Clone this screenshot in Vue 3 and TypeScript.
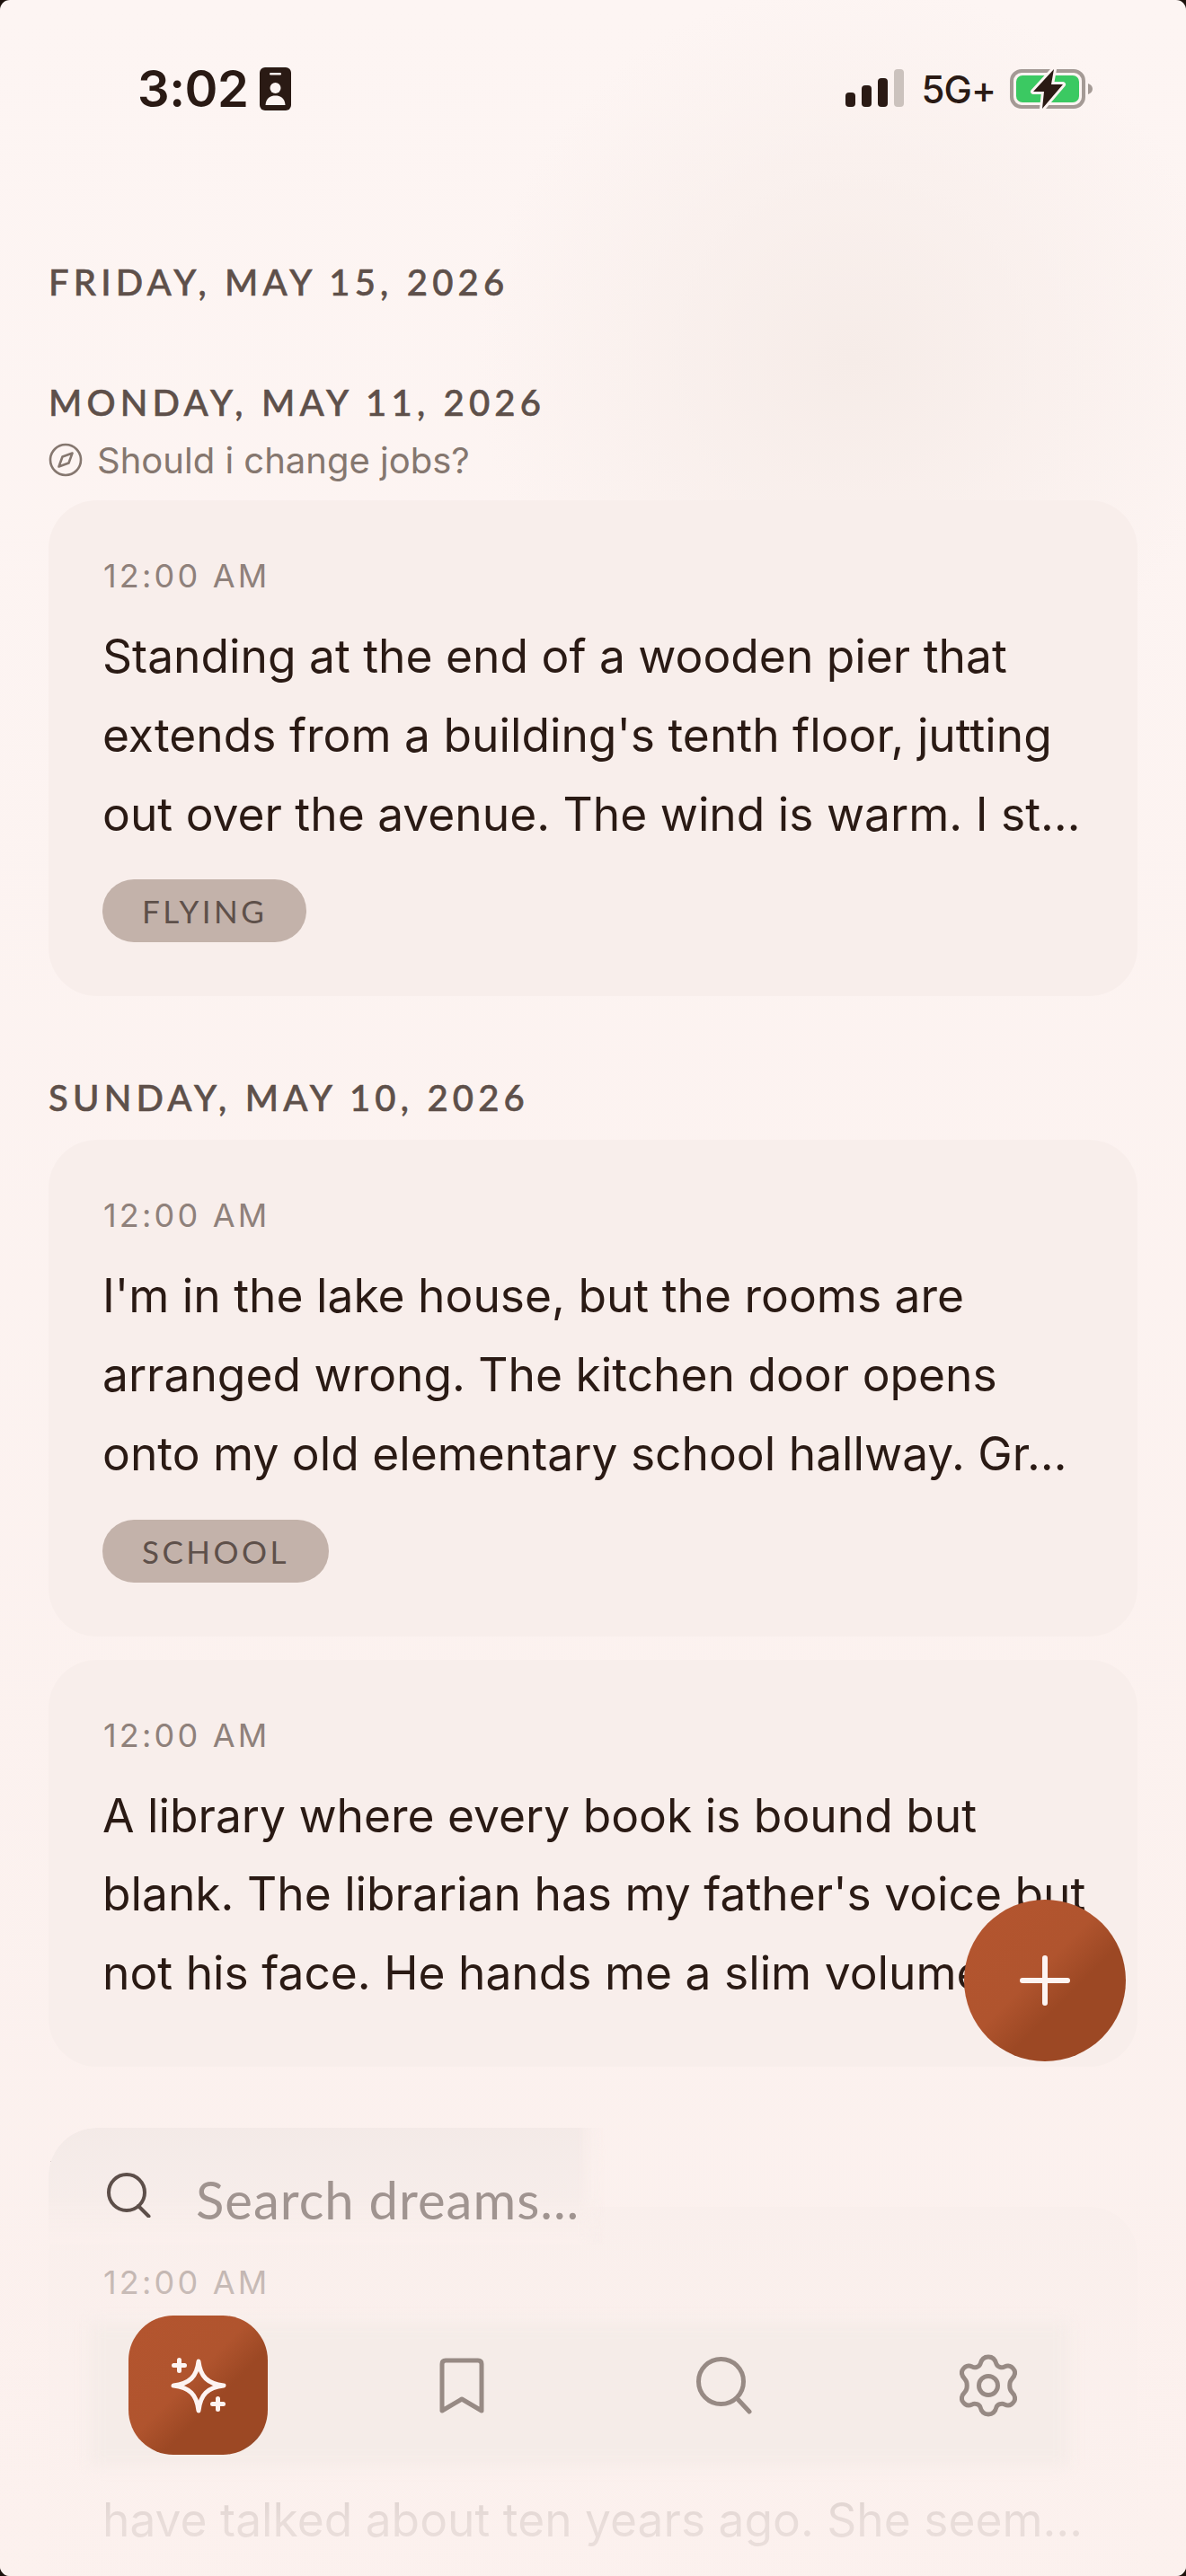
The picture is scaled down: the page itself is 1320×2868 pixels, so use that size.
<script setup lang="ts">
interface Dream {
  text: string[]
  tag?: string
}

interface Section {
  date: string
  question?: string
  dreams: Dream[]
}

const sections: Section[] = [
  { date: 'FRIDAY, MAY 15, 2026', dreams: [] },
  {
    date: 'MONDAY, MAY 11, 2026',
    question: 'Should i change jobs?',
    dreams: [
      {
        text: [
          'Standing at the end of a wooden pier that',
          "extends from a building's tenth floor, jutting",
          'out over the avenue. The wind is warm. I st…'
        ],
        tag: 'FLYING'
      }
    ]
  },
  {
    date: 'SUNDAY, MAY 10, 2026',
    dreams: [
      {
        text: [
          "I'm in the lake house, but the rooms are",
          'arranged wrong. The kitchen door opens',
          'onto my old elementary school hallway. Gr…'
        ],
        tag: 'SCHOOL'
      },
      {
        text: [
          'A library where every book is bound but',
          "blank. The librarian has my father's voice but",
          'not his face. He hands me a slim volume…'
        ]
      }
    ]
  },
  {
    // header of this day sits behind the search bar
    date: '',
    dreams: [
      {
        text: ['\u00a0', '\u00a0', 'have talked about ten years ago. She seem…']
      }
    ]
  }
]
</script>

<template>
  <div class="screen">
    <div class="status-bar">
      <div class="status-left">
        <span class="clock">3:02</span>
        <svg class="badge" viewBox="0 0 35 48" width="35" height="48">
          <rect width="35" height="48" rx="6" fill="#2a1a14" />
          <rect x="11" y="6" width="13" height="2.6" rx="1.3" fill="#fdf4f2" />
          <circle cx="17.5" cy="23" r="6" fill="#fdf4f2" />
          <path d="M6.5 42 C7 34 12 31.5 17.5 31.5 S28 34 28.5 42 Z" fill="#fdf4f2" />
        </svg>
      </div>
      <div class="status-right">
        <svg viewBox="0 0 66 44" width="66" height="44">
          <rect x="1" y="26" width="11" height="16" rx="4" fill="#2a1a14" />
          <rect x="19" y="18" width="11" height="24" rx="4" fill="#2a1a14" />
          <rect x="37" y="10" width="11" height="32" rx="4" fill="#2a1a14" />
          <rect x="55" y="0" width="11" height="42" rx="4" fill="#cbc2bd" />
        </svg>
        <span class="network">5G+</span>
        <svg class="battery" viewBox="0 0 92 50" width="92" height="50">
          <rect x="2" y="5" width="80" height="40" rx="11" fill="none" stroke="#a49a95" stroke-width="4" />
          <rect x="7" y="10" width="70" height="30" rx="7" fill="#3bc962" />
          <path d="M87 19 C90 20 92 22 92 25 S90 30 87 31 Z" fill="#a49a95" />
          <path d="M49 3 L26 28 H38 L36 47 L59 20 H46 Z" fill="#2a1a14" stroke="#fdf4f2" stroke-width="6" stroke-linejoin="round" paint-order="stroke" />
        </svg>
      </div>
    </div>

    <main class="feed">
      <section v-for="section in sections" :key="section.date" class="day">
        <h2 class="date">{{ section.date }}</h2>
        <div v-if="section.question" class="question">
          <svg viewBox="0 0 38 38" width="38" height="38" fill="none" stroke="#85776f" stroke-width="2.6">
            <circle cx="19" cy="19" r="17" />
            <path d="M26.500 11.500 L22.500 22.500 L11.500 26.500 L15.500 15.500 Z" stroke-linejoin="round" />
          </svg>
          <span>{{ section.question }}</span>
        </div>
        <article v-for="dream in section.dreams" :key="dream.text[2]" class="card">
          <div class="time">12:00 AM</div>
          <p class="body">
            <span v-for="line in dream.text" :key="line + dream.text[2]" class="line">{{ line }}</span>
          </p>
          <span v-if="dream.tag" class="tag">{{ dream.tag }}</span>
        </article>
      </section>
    </main>

    <div class="fade"></div>

    <div class="search">
      <svg viewBox="0 0 50 50" width="50" height="50" fill="none" stroke="#5d4f4a" stroke-width="4" stroke-linecap="round">
        <circle cx="23" cy="22" r="20" />
        <path d="M36 37 L47.500 48.500" />
      </svg>
      <span>Search dreams...</span>
    </div>

    <button class="fab" type="button">
      <svg viewBox="0 0 56 56" width="56" height="56" fill="none" stroke="#fdf4f2" stroke-width="6" stroke-linecap="round">
        <path d="M28 3 V53 M3 28 H53" />
      </svg>
    </button>

    <nav class="tabs">
      <button class="tab tab-active" type="button">
        <svg viewBox="0 0 64 64" width="64" height="64" fill="none" stroke="#fdf4f2" stroke-linecap="round" stroke-linejoin="round">
          <path d="M32 5 C34 22 42 30 60 32 C42 34 34 42 32 60 C30 42 22 34 4 32 C22 30 30 22 32 5 Z" stroke-width="5" />
          <path d="M10.500 3.500 V15.500 M4.500 9.500 H16.500 M53.500 46.500 V58.500 M47.500 52.500 H59.500" stroke-width="5" />
        </svg>
      </button>
      <button class="tab" type="button">
        <svg viewBox="0 0 50 62" width="50" height="62" fill="none" stroke="#978a84" stroke-width="5" stroke-linejoin="round">
          <path d="M3 59 V7 Q3 3 7 3 H43 Q47 3 47 7 V59 L25 46 Z" />
        </svg>
      </button>
      <button class="tab" type="button">
        <svg viewBox="0 0 64 64" width="64" height="64" fill="none" stroke="#978a84" stroke-width="5" stroke-linecap="round">
          <circle cx="27.500" cy="27.500" r="25" />
          <path d="M45 46 L59 61" />
        </svg>
      </button>
      <button class="tab" type="button">
        <svg viewBox="0 0 64 70" width="64" height="70" fill="none" stroke="#978a84" stroke-width="5" stroke-linejoin="round">
          <circle cx="32" cy="35" r="10.500" />
          <path d="M32 3 C38 3 40 7 41 11 C42 14 47 16 50 14 C54 12 58 13 61 18 C63 23 60 26 58 28 C55 31 55 39 58 42 C60 44 63 47 61 52 C58 57 54 58 50 56 C47 54 42 56 41 59 C40 63 38 67 32 67 C26 67 24 63 23 59 C22 56 17 54 14 56 C10 58 6 57 3 52 C1 47 4 44 6 42 C9 39 9 31 6 28 C4 26 1 23 3 18 C6 13 10 12 14 14 C17 16 22 14 23 11 C24 7 26 3 32 3 Z" />
        </svg>
      </button>
    </nav>
  </div>
</template>

<style>
html,
body {
  margin: 0;
  background: #1c110c;
}
</style>

<style scoped>
.screen {
  position: relative;
  width: 1320px;
  height: 2868px;
  overflow: hidden;
  border-radius: 11px;
  background:
    radial-gradient(ellipse 420px 420px at 950px 400px, #f6ece8 0%, rgba(246, 236, 232, 0) 100%),
    linear-gradient(180deg, #fdf5f3 0%, #fbf0ed 100%);
  color: #2a1a14;
  font-family: Inter, "Liberation Sans", sans-serif;
}

.status-bar {
  display: flex;
  justify-content: space-between;
  align-items: center;
  height: 74px;
  padding: 62px 104px 0 153px;
}

.status-left {
  display: flex;
  align-items: center;
  gap: 13px;
}

.clock {
  font-size: 56px;
  font-weight: 600;
  line-height: 60px;
  letter-spacing: -0.5px;
}

.status-right {
  display: flex;
  align-items: center;
  gap: 20px;
}

.battery {
  margin-left: -4px;
}

.network {
  font-size: 42px;
  font-weight: 500;
  letter-spacing: -1px;
}

.feed {
  display: flex;
  flex-direction: column;
  padding: 0 54px;
  gap: 89px;
  margin-top: 154px;
}

.day {
  display: flex;
  flex-direction: column;
  gap: 26px;
}

.day:last-child {
  margin-top: -4px;
}

.date {
  margin: 0 0 -3px;
  height: 48px;
  font-family: Lato, "Liberation Sans", sans-serif;
  font-size: 40px;
  font-weight: 500;
  line-height: 48px;
  letter-spacing: 5.2px;
  color: #5e504a;
  -webkit-text-stroke: 0.6px #5e504a;
}

.question {
  display: flex;
  align-items: center;
  gap: 16px;
  margin: -7px 0 -5px;
  height: 48px;
  font-size: 40px;
  color: #85776f;
}

.card {
  display: flex;
  flex-direction: column;
  align-items: flex-start;
  padding: 60px;
  border-radius: 54px;
  background: #f8eeeb;
}

.time {
  height: 48px;
  font-size: 36px;
  line-height: 48px;
  letter-spacing: 3.2px;
  color: #8f817b;
  margin-left: 1px;
}

.body {
  margin: 22px 0 0;
  font-size: 51.5px;
  line-height: 87.75px;
  white-space: nowrap;
}

.line {
  display: block;
}

.tag {
  margin-top: 29px;
  height: 70px;
  padding: 0 44px;
  border-radius: 35px;
  background: #c3b2aa;
  font-family: Lato, "Liberation Sans", sans-serif;
  font-size: 35px;
  line-height: 70px;
  letter-spacing: 3.5px;
  color: #5e504a;
}

.fade {
  position: absolute;
  left: 0;
  right: 0;
  top: 2290px;
  bottom: 0;
  background: linear-gradient(180deg, rgba(252, 241, 238, 0) 0%, rgba(252, 241, 238, 0.5) 43%, rgba(252, 241, 238, 0.91) 90%);
}

.search {
  position: absolute;
  left: 54px;
  top: 2369px;
  width: 620px;
  height: 130px;
  box-sizing: border-box;
  display: flex;
  align-items: flex-start;
  gap: 50px;
  padding: 50px 0 0 64px;
  border-radius: 54px 0 0 0;
  background: linear-gradient(180deg, rgba(243, 233, 230, 0.95) 0%, rgba(246, 236, 233, 0.95) 60%, rgba(251, 240, 237, 0.7) 100%);
  backdrop-filter: blur(30px);
  -webkit-mask-image: linear-gradient(90deg, #000 95%, transparent 100%);
  mask-image: linear-gradient(90deg, #000 95%, transparent 100%);
  font-family: Lato, "Liberation Sans", sans-serif;
  font-size: 58px;
  line-height: 60px;
  letter-spacing: 1px;
  color: #a09490;
}

.search::before {
  content: "";
  position: absolute;
  left: 1px;
  top: 24px;
  height: 14px;
  border-left: 2px solid #5d4f4a;
}

.fab {
  position: absolute;
  left: 1073px;
  top: 2115px;
  width: 180px;
  height: 180px;
  display: flex;
  align-items: center;
  justify-content: center;
  padding: 0;
  border: none;
  border-radius: 50%;
  background: linear-gradient(135deg, #b4552f 0%, #b0542e 45%, #9c4824 62%, #9c4824 88%, #7d4a34 100%);
}

.tabs {
  position: absolute;
  z-index: 0;
  left: 100px;
  top: 2578px;
  width: 1090px;
  height: 167px;
  box-sizing: border-box;
  display: grid;
  grid-template-columns: repeat(4, 155px);
  grid-template-rows: 155px;
  column-gap: 138px;
  padding: 0 0 0 43px;
}

.tabs::before {
  content: "";
  position: absolute;
  z-index: -1;
  inset: 8px 0 0;
  background: #f5ece8;
  filter: blur(8px);
}

.tab {
  display: flex;
  align-items: center;
  justify-content: center;
  padding: 0;
  border: none;
  border-radius: 50px;
  background: transparent;
}

.tab-active {
  background: linear-gradient(135deg, #b4552f 0%, #b0542e 45%, #9c4824 62%, #9c4824 88%, #7d4a34 100%);
}
</style>
